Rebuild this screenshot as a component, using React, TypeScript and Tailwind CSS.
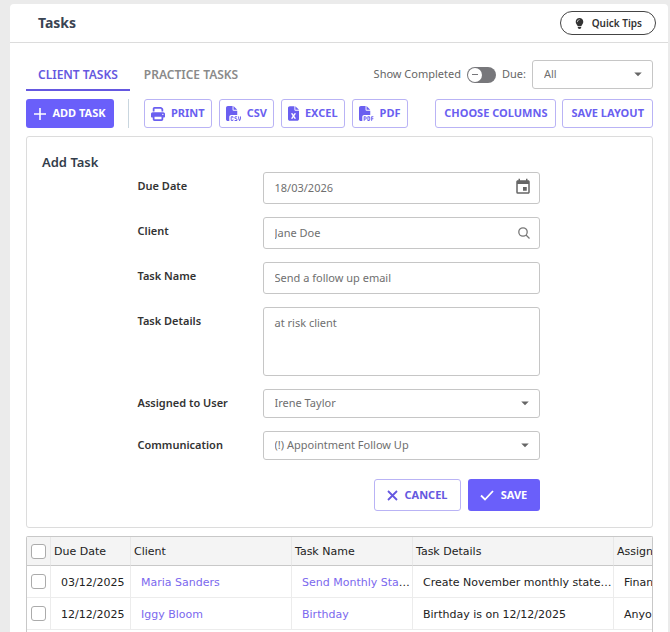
import React, { useState } from 'react';
import { FaFileCsv, FaFileExcel, FaFilePdf, FaLightbulb, FaPrint } from 'react-icons/fa6';
import { MdArrowDropDown, MdEvent } from 'react-icons/md';

interface Task {
    id: number;
    dueDate: string;
    client: string;
    name: string;
    details: string;
    assigned: string;
}

const tasks: Task[] = [
    { id: 1, dueDate: '03/12/2025', client: 'Maria Sanders', name: 'Send Monthly Statements', details: 'Create November monthly statements', assigned: 'Finance' },
    { id: 2, dueDate: '12/12/2025', client: 'Iggy Bloom', name: 'Birthday', details: 'Birthday is on 12/12/2025', assigned: 'Anyone' },
];

const exportButtons = [
    { label: 'PRINT', icon: <FaPrint size={14} /> },
    { label: 'CSV', icon: <FaFileCsv size={15} /> },
    { label: 'EXCEL', icon: <FaFileExcel className="h-[15px] w-[11px]" /> },
    { label: 'PDF', icon: <FaFilePdf size={15} /> },
];

const outlineButton = 'flex h-[29px] items-center justify-center rounded-[3px] border border-[#b9b3f5] bg-white text-[11px] font-bold whitespace-nowrap text-[#6a5ff0]';
const fieldClass = 'block h-8 w-full rounded-[3px] border border-[#c6c6c6] bg-white px-[11px] pb-[2px] text-[11px] text-[#6f6f6f] outline-none';

const SelectBox: React.FC<{ id: string; options: string[] }> = ({ id, options }) => (
    <div className="relative">
        <select id={id} className="block h-[29px] w-full appearance-none rounded-[3px] border border-[#c6c6c6] bg-white pr-8 pl-[11px] text-[11px] text-[#6f6f6f] outline-none">
            {options.map(option => <option key={option}>{option}</option>)}
        </select>
        <MdArrowDropDown size={18} className="pointer-events-none absolute top-[5px] right-[6px] text-[#666]" />
    </div>
);

const FormRow: React.FC<{ id: string; label: string; children: React.ReactNode }> = ({ id, label, children }) => (
    <div className="flex items-start">
        <label htmlFor={id} className="w-[125px] shrink-0 text-[11px] leading-7 font-semibold text-[#333]">{label}</label>
        <div className="relative min-w-0 flex-1">{children}</div>
    </div>
);

const Checkbox: React.FC<{ label: string }> = ({ label }) => (
    <input type="checkbox" aria-label={label} className="block size-[15px] appearance-none rounded-[3px] border border-[#ababab] bg-white checked:bg-[#6a5ffa]" />
);

const AddTaskForm: React.FC = () => {
    const [dueDate, setDueDate] = useState('18/03/2026');
    const [client, setClient] = useState('Jane Doe');
    const [taskName, setTaskName] = useState('Send a follow up email');
    const [details, setDetails] = useState('at risk client');

    return (
        <section className="rounded-[3px] border border-[#dcdcdc] pt-[15px] pr-[17px] pb-4 pl-[15px]">
            <h2 className="text-[13px] leading-5 font-semibold text-[#333d4b]">Add Task</h2>
            <form onSubmit={e => e.preventDefault()} className="mx-auto flex w-full max-w-[402px] flex-col gap-[13px]">
                <FormRow id="due-date" label="Due Date">
                    <input id="due-date" type="text" value={dueDate} onChange={e => setDueDate(e.target.value)} className={fieldClass} />
                    <MdEvent size={18} className="absolute top-[6px] right-2 text-[#666]" />
                </FormRow>
                <FormRow id="client" label="Client">
                    <input id="client" type="text" value={client} onChange={e => setClient(e.target.value)} className={fieldClass} />
                    <svg width="14" height="14" viewBox="0 0 14 14" fill="none" stroke="#777" strokeWidth="1.3" className="absolute top-[9px] right-[9px]">
                        <circle cx="6" cy="6" r="4.2" />
                        <path d="M9 9l3.5 3.5" />
                    </svg>
                </FormRow>
                <FormRow id="task-name" label="Task Name">
                    <input id="task-name" type="text" value={taskName} onChange={e => setTaskName(e.target.value)} className={fieldClass} />
                </FormRow>
                <FormRow id="task-details" label="Task Details">
                    <textarea id="task-details" value={details} onChange={e => setDetails(e.target.value)} className="block h-[69px] w-full resize-none rounded-[3px] border border-[#c6c6c6] px-[11px] py-[7px] text-[11px] text-[#6f6f6f] outline-none" />
                </FormRow>
                <FormRow id="assigned" label="Assigned to User">
                    <SelectBox id="assigned" options={['Irene Taylor']} />
                </FormRow>
                <FormRow id="communication" label="Communication">
                    <SelectBox id="communication" options={['(!) Appointment Follow Up']} />
                </FormRow>
                <div className="flex justify-end gap-[7px] pt-[6px]">
                    <button type="button" className="flex h-8 w-[87px] items-center justify-center gap-[7px] rounded-[3px] border border-[#b9b3f5] text-[11px] font-bold text-[#6558e0]">
                        <svg width="11" height="11" viewBox="0 0 11 11" stroke="currentColor" strokeWidth="1.8"><path d="M1 1l9 9M10 1l-9 9" /></svg>
                        CANCEL
                    </button>
                    <button type="submit" className="flex h-8 w-[72px] items-center justify-center gap-[7px] rounded-[3px] bg-[#6a5ffa] text-[11px] font-bold text-white">
                        <svg width="14" height="11" viewBox="0 0 14 11" fill="none" stroke="currentColor" strokeWidth="1.8"><path d="M1 5.5l4 4L13 1" /></svg>
                        SAVE
                    </button>
                </div>
            </form>
        </section>
    );
};

const TaskTable: React.FC = () => (
    <div className="flex-1 overflow-hidden rounded-t-[2px] border border-b-0 border-[#c8c8c8] font-['DejaVu_Sans',sans-serif] text-[11px] text-[#222]">
        <table className="w-[720px] table-fixed border-separate border-spacing-0 text-left">
            <colgroup>
                <col className="w-6" />
                <col className="w-20" />
                <col className="w-[161px]" />
                <col className="w-[121px]" />
                <col className="w-[201px]" />
                <col />
            </colgroup>
            <thead className="bg-[#f4f4f4]">
                <tr className="h-[29px] [&>th]:border-b [&>th]:border-b-[#c8c8c8]">
                    <th className="border-r border-r-[#e8e8e8] pl-1"><Checkbox label="Select all tasks" /></th>
                    {['Due Date', 'Client', 'Task Name', 'Task Details', 'Assigned'].map(title => (
                        <th key={title} className="border-r border-r-[#e8e8e8] px-[3px] pt-[2px] font-normal">{title}</th>
                    ))}
                </tr>
            </thead>
            <tbody>
                {tasks.map(task => (
                    <tr key={task.id} className="h-8 [&>td]:truncate [&>td]:border-r [&>td]:border-b [&>td]:border-[#ececec] [&>td+td]:pt-[3px] [&>td+td]:pl-[10px]">
                        <td className="pl-1"><Checkbox label={`Select ${task.name}`} /></td>
                        <td>{task.dueDate}</td>
                        <td><a href="#" className="text-[#7b68ee]">{task.client}</a></td>
                        <td><a href="#" className="text-[#7b68ee]">{task.name}</a></td>
                        <td>{task.details}</td>
                        <td>{task.assigned}</td>
                    </tr>
                ))}
            </tbody>
        </table>
    </div>
);

const App: React.FC = () => {
    const [showCompleted, setShowCompleted] = useState(false);

    return (
        <div className="flex min-h-screen flex-col bg-[#ebebeb] pt-1 pr-[2px] pl-[10px] font-['Noto_Sans',sans-serif]">
            <main className="flex flex-1 flex-col rounded-t-[4px] bg-white">
                <header className="flex h-[39px] items-center justify-between border-b border-[#dcdcdc] pr-3 pl-7">
                    <h1 className="text-sm font-bold text-[#3a4453]">Tasks</h1>
                    <button className="flex h-6 items-center gap-[7px] rounded-full border border-[#444] px-[13px] text-[10px] font-semibold text-[#333]">
                        <FaLightbulb size={11} />
                        Quick Tips
                    </button>
                </header>

                <div className="flex flex-1 flex-col pr-[15px] pl-4">
                    <div className="flex h-12 items-end justify-between">
                        <nav className="flex text-xs font-semibold">
                            <a href="#" className="flex h-8 items-center border-b-2 border-[#6558e0] px-3 pt-[2px] text-[#6558e0]">CLIENT TASKS</a>
                            <a href="#" className="flex h-8 items-center border-b-2 border-transparent px-[14px] pt-[2px] text-[#8a8a8a]">PRACTICE TASKS</a>
                        </nav>
                        <div className="flex items-center pb-[2px] text-[11px] text-[#666]">
                            <label htmlFor="show-completed">Show Completed</label>
                            <span className="relative mx-[6px] flex">
                                <input id="show-completed" type="checkbox" checked={showCompleted} onChange={e => setShowCompleted(e.target.checked)} className="h-4 w-[29px] appearance-none rounded-full bg-[#77777b]" />
                                <span className="pointer-events-none absolute top-px left-px flex size-[14px] items-center justify-center rounded-full bg-white">
                                    <span className="h-px w-[6px] bg-[#77777b]" />
                                </span>
                            </span>
                            <label htmlFor="due">Due:</label>
                            <div className="ml-[6px] w-[121px]">
                                <SelectBox id="due" options={['All']} />
                            </div>
                        </div>
                    </div>

                    <div className="mt-2 flex items-center">
                        <button className="flex h-[29px] w-[88px] items-center justify-center gap-[6px] rounded-[3px] bg-[#6a5ffa] text-[11px] font-bold text-white">
                            <svg width="12" height="12" viewBox="0 0 12 12" stroke="currentColor" strokeWidth="1.6"><path d="M6 0v12M0 6h12" /></svg>
                            ADD TASK
                        </button>
                        <div className="mr-[15px] ml-[14px] h-[29px] w-px bg-[#c9d6df]" />
                        <div className="flex gap-[7px]">
                            {exportButtons.map(button => (
                                <button key={button.label} className={`${outlineButton} gap-[6px] px-[6px]`}>
                                    {button.icon}
                                    {button.label}
                                </button>
                            ))}
                        </div>
                        <div className="ml-auto flex gap-[6px]">
                            <button className={`${outlineButton} px-2`}>CHOOSE COLUMNS</button>
                            <button className={`${outlineButton} px-2`}>SAVE LAYOUT</button>
                        </div>
                    </div>

                    <div className="mt-2 mb-2">
                        <AddTaskForm />
                    </div>

                    <TaskTable />
                </div>
            </main>
        </div>
    );
};

export default App;
